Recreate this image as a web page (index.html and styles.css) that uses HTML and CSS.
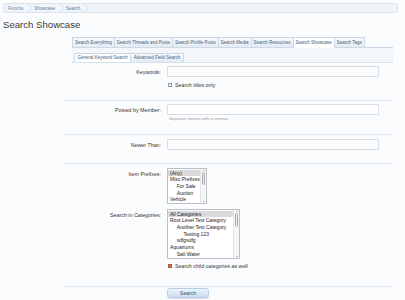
FILE: index.html
```html
<!DOCTYPE html>
<html>
<head>
  <meta charset="UTF-8">
  <title>Search Showcase</title>
  <link rel="stylesheet" href="styles.css">
</head>
<body>
  <div class="page">
    <div class="breadcrumb">
      <a href="#" class="crumb">Forums</a>
      <svg class="crumb-sep" viewBox="0 0 5 8"><polyline points="0.5,0 4.5,4 0.5,8" /></svg>
      <a href="#" class="crumb">Showcase</a>
      <svg class="crumb-sep" viewBox="0 0 5 8"><polyline points="0.5,0 4.5,4 0.5,8" /></svg>
      <a href="#" class="crumb">Search</a>
      <svg class="crumb-sep" viewBox="0 0 5 8"><polyline points="0.5,0 4.5,4 0.5,8" /></svg>
    </div>

    <h1 class="page-title">Search Showcase</h1>

    <div class="search-tabs">
      <ul class="tabs">
        <li>Search Everything</li>
        <li>Search Threads and Posts</li>
        <li>Search Profile Posts</li>
        <li>Search Media</li>
        <li>Search Resources</li>
        <li class="active">Search Showcase</li>
        <li>Search Tags</li>
      </ul>
      <div class="sub-bar">
        <ul class="subtabs">
          <li class="active">General Keyword Search</li>
          <li>Advanced Field Search</li>
        </ul>
      </div>
    </div>

    <form class="search-form">
      <div class="row row-keywords">
        <label class="row-label" for="keywords">Keywords:</label>
        <div class="row-ctrl">
          <input type="text" id="keywords" class="text-input">
          <div class="check"><span class="box"></span>Search titles only</div>
        </div>
      </div>

      <div class="row row-member sep">
        <label class="row-label" for="member">Posted by Member:</label>
        <div class="row-ctrl">
          <input type="text" id="member" class="text-input">
          <div class="hint">Separate names with a comma.</div>
        </div>
      </div>

      <div class="row row-date sep">
        <label class="row-label" for="newer">Newer Than:</label>
        <div class="row-ctrl">
          <input type="text" id="newer" class="text-input">
        </div>
      </div>

      <div class="row row-prefixes sep">
        <label class="row-label">Item Prefixes:</label>
        <div class="row-ctrl">
          <div class="listbox prefixes">
            <ul class="options">
              <li class="selected">(Any)</li>
              <li>Misc Prefixes</li>
              <li class="lvl1">For Sale</li>
              <li class="lvl1">Auction</li>
              <li>Vehicle</li>
            </ul>
            <div class="scrollbar">
              <span class="sb-btn up"></span>
              <span class="sb-thumb"></span>
              <span class="sb-track"></span>
              <span class="sb-btn down"></span>
            </div>
          </div>
        </div>
      </div>

      <div class="row row-categories">
        <label class="row-label">Search in Categories:</label>
        <div class="row-ctrl">
          <div class="listbox categories">
            <ul class="options">
              <li class="selected">All Categories</li>
              <li>Root Level Test Category</li>
              <li class="lvl1">Another Test Category</li>
              <li class="lvl2">Testing 123</li>
              <li class="lvl1">sdfgsdfg</li>
              <li>Aquariums</li>
              <li class="lvl1">Salt Water</li>
            </ul>
            <div class="scrollbar">
              <span class="sb-btn up"></span>
              <span class="sb-thumb"></span>
              <span class="sb-track"></span>
              <span class="sb-btn down"></span>
            </div>
          </div>
          <div class="check">
            <span class="box checked">
              <svg viewBox="0 0 4 4"><polyline points="0.7,2 1.6,3 3.3,0.9" /></svg>
            </span>Search child categories as well
          </div>
        </div>
      </div>

      <div class="row row-submit sep">
        <span class="row-label"></span>
        <div class="row-ctrl">
          <button type="submit" class="button">Search</button>
        </div>
      </div>
    </form>
  </div>
</body>
</html>
```

FILE: styles.css
```css
body {
  margin: 0;
  background: #fbfcfd;
  font-family: "Liberation Sans", Arial, sans-serif;
  color: #333;
}
.page {
  padding: 3px 7px 0 3px;
}

/* breadcrumb */
.breadcrumb {
  display: flex;
  align-items: center;
  height: 10px;
  box-sizing: border-box;
  padding-left: 4px;
  border: 1px solid #dbe4ee;
  border-radius: 2px;
  background: #f0f5fa;
  font-size: 4.5px;
}
.crumb {
  color: #5d7ea3;
  text-decoration: none;
}
.crumb-sep {
  width: 5px;
  height: 8px;
  margin: 0 2px 0 4px;
}
.crumb-sep polyline {
  fill: none;
  stroke: #c5d3e1;
  stroke-width: 0.7;
}

.page-title {
  margin: 5px 0 0;
  font-size: 9.6px;
  font-weight: normal;
  line-height: 14px;
  color: #3a3a3a;
}

/* tabs */
.search-tabs {
  margin: 5px 5px 0 69px;
}
.tabs,
.subtabs {
  display: flex;
  list-style: none;
  margin: 0;
  padding: 0;
}
.tabs {
  border-bottom: 1px solid #cbd8e5;
}
.tabs li,
.subtabs li {
  font-size: 4.5px;
  white-space: nowrap;
  color: #3f5d7d;
  border: 1px solid #cbd8e5;
  border-right: none;
  background: linear-gradient(#f6f9fc, #e4ebf4);
  margin-bottom: -1px;
}
.tabs li {
  line-height: 9px;
  padding: 0 2px;
}
.tabs li:last-child,
.subtabs li:last-child {
  border-right: 1px solid #cbd8e5;
}
.tabs li.active,
.subtabs li.active {
  background: #fff;
  border-bottom-color: #fff;
}
.sub-bar {
  padding: 5px 0 0 2px;
  background: #f3f6fa;
  border-bottom: 1px solid #d6e0ea;
}
.subtabs li {
  line-height: 8px;
  padding: 0 2.5px;
  border-bottom: none;
  margin-bottom: 0;
}

/* form */
.search-form {
  margin: 0 5px 0 60px;
}
.row {
  display: grid;
  grid-template-columns: 98px 212px;
  column-gap: 6px;
}
.row.sep {
  border-top: 1px solid #e3e9f0;
}
.row-keywords { padding: 3px 0 12px; }
.row-member { padding: 3px 0 12px; }
.row-date { padding: 4px 0 12px; }
.row-prefixes { padding: 4px 0 5px; }
.row-categories { padding: 0 0 17px; }
.row-submit { padding: 1px 0 3px; }

.row-label {
  text-align: right;
  font-size: 5.3px;
  line-height: 12px;
  color: #333;
}
.text-input {
  display: block;
  width: 100%;
  height: 11px;
  box-sizing: border-box;
  margin: 0;
  padding: 0;
  border: 1px solid #d5dde6;
  border-radius: 1px;
  background: #fff;
}
.check {
  display: flex;
  align-items: center;
  gap: 3px;
  margin-top: 5px;
  padding-left: 1px;
  font-size: 5.3px;
  line-height: 6px;
  color: #333;
}
.row-categories .check {
  margin-top: 4px;
}
.box {
  display: block;
  width: 4px;
  height: 4px;
  box-sizing: border-box;
  border: 0.6px solid #8f99a4;
  border-radius: 0.5px;
  background: #fff;
}
.box.checked {
  background: #cd6a43;
  border-color: #a9532f;
}
.box svg {
  display: block;
  width: 100%;
  height: 100%;
}
.box polyline {
  fill: none;
  stroke: #fff;
  stroke-width: 0.7;
}
.hint {
  margin-top: 1px;
  padding-left: 2px;
  font-size: 4.3px;
  line-height: 6px;
  color: #9a9a9a;
}

/* list boxes */
.listbox {
  display: flex;
  box-sizing: border-box;
  border: 1px solid #b9c0c8;
  background: #fff;
}
.listbox.prefixes {
  width: 40px;
  height: 36px;
}
.listbox.categories {
  width: 73px;
  height: 50px;
}
.options {
  flex: 1;
  list-style: none;
  margin: 0;
  padding: 0.5px 0 0;
  overflow: hidden;
  white-space: nowrap;
  font-size: 5px;
  line-height: 6.7px;
  color: #222;
}
.options li {
  padding-left: 2px;
}
.options li.lvl1 {
  padding-left: 8.7px;
}
.options li.lvl2 {
  padding-left: 15.4px;
}
.options li.selected {
  background: #dadada;
}
.scrollbar {
  display: flex;
  flex-direction: column;
  align-items: center;
  width: 5px;
  border-left: 1px solid #e4e4e4;
  background: #f6f6f6;
}
.sb-btn {
  width: 0;
  height: 0;
  margin: 1px 0;
  border-left: 1.3px solid transparent;
  border-right: 1.3px solid transparent;
}
.sb-btn.up {
  border-bottom: 1.5px solid #8a8a8a;
}
.sb-btn.down {
  border-top: 1.5px solid #8a8a8a;
}
.sb-thumb {
  width: 3px;
  height: 13px;
  box-sizing: border-box;
  border: 0.6px solid #a9a9a9;
  border-radius: 1.5px;
  background: #ececec;
}
.categories .sb-thumb {
  height: 14px;
}
.sb-track {
  flex: 1;
}

.button {
  display: block;
  width: 42px;
  height: 10px;
  margin: 0;
  padding: 0;
  border: 1px solid #b6cce2;
  border-radius: 3px;
  background: linear-gradient(#eef5fc, #c8dbee);
  box-shadow: 0 1px 1px rgba(0, 0, 0, 0.12);
  font-family: "Liberation Sans", Arial, sans-serif;
  font-size: 5px;
  color: #2e4b6a;
}
```
